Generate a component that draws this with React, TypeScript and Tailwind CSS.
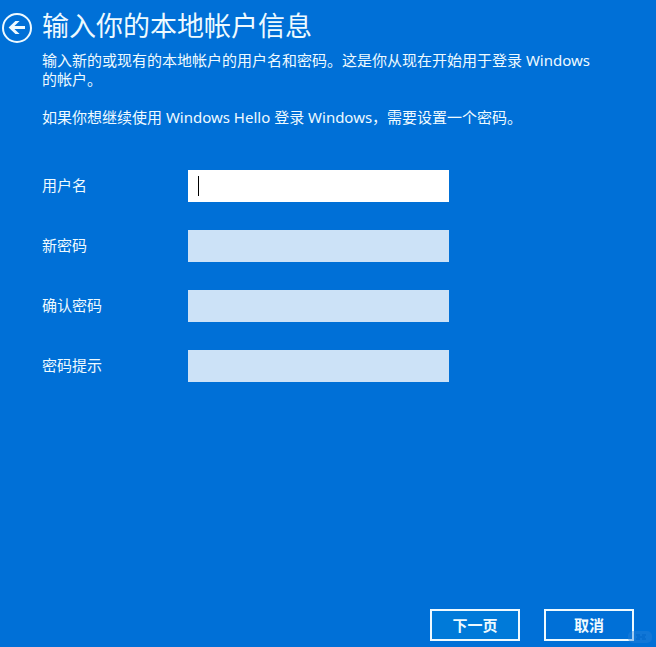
import React, { useState } from 'react';

type Field = {
  id: string;
  label: string;
  type: string;
};

const fields: Field[] = [
  { id: 'username', label: '用户名', type: 'text' },
  { id: 'password', label: '新密码', type: 'password' },
  { id: 'confirm', label: '确认密码', type: 'password' },
  { id: 'hint', label: '密码提示', type: 'text' },
];

const App: React.FC = () => {
  const [values, setValues] = useState<Record<string, string>>({});
  const [active, setActive] = useState('username');

  return (
    <div
      lang="zh-CN"
      className="relative flex min-h-screen flex-col bg-[#0070d7] font-['Noto_Sans','Noto_Sans_CJK_SC',sans-serif] text-[15px] leading-[19px] text-[#eefaff]"
    >
      {/* Title */}
      <header className="flex items-center gap-2 pt-2 pl-0.5">
        <button type="button" aria-label="返回" className="mt-1 shrink-0">
          <svg viewBox="0 0 32 32" className="h-8 w-8" fill="none">
            <circle cx="15" cy="16" r="14" stroke="currentColor" strokeWidth="2" />
            <path
              d="M6.6 15.5L13.4 9H17.6L12.4 14H23V17H12.4L17.6 22H13.4Z"
              fill="currentColor"
            />
          </svg>
        </button>
        <h1 className="text-[27px] leading-9">输入你的本地帐户信息</h1>
      </header>

      <main className="flex-1 pr-12 pl-[42px]">
        <p className="mt-[7px]">
          输入新的或现有的本地帐户的用户名和密码。这是你从现在开始用于登录 Windows 的帐户。
        </p>
        <p className="mt-[19px]">
          如果你想继续使用 Windows Hello 登录 Windows，需要设置一个密码。
        </p>

        <form id="account" className="mt-[43px] flex flex-col gap-7" onSubmit={(e) => e.preventDefault()}>
          {fields.map((field) => (
            <div key={field.id} className="flex items-center">
              <label htmlFor={field.id} className="w-[146px] shrink-0 pb-0.5">
                {field.label}
              </label>
              <div className="relative w-[261px]">
                <input
                  id={field.id}
                  type={field.type}
                  value={values[field.id] ?? ''}
                  onFocus={() => setActive(field.id)}
                  onChange={(e) => setValues({ ...values, [field.id]: e.target.value })}
                  className={`block h-8 w-full px-2.5 text-black outline-none ${
                    active === field.id ? 'bg-white' : 'bg-[#cce2f7]'
                  }`}
                />
                {/* Caret of the empty active field */}
                {active === field.id && !values[field.id] && (
                  <span className="pointer-events-none absolute top-1.5 left-2.5 h-5 w-px bg-black" />
                )}
              </div>
            </div>
          ))}
        </form>
      </main>

      <footer className="flex justify-end gap-6 pr-[22px] pb-1.5 font-bold">
        <button type="submit" form="account" className="h-8 w-[90px] border-2 border-[#eefaff] bg-[#007ad9]">
          下一页
        </button>
        <button type="button" className="h-8 w-[90px] border-2 border-[#eefaff]">
          取消
        </button>
      </footer>

      {/* Watermark */}
      <svg viewBox="0 0 24 12" className="pointer-events-none absolute right-1 bottom-1 h-3 w-6" fill="none">
        <rect width="24" height="12" rx="5" fill="#2a83d8" fillOpacity="0.4" />
        <path d="M8 4h4M8 8h4M14 4h4M14 8h4M9 6h8" stroke="#0067c8" />
      </svg>
    </div>
  );
};

export default App;
